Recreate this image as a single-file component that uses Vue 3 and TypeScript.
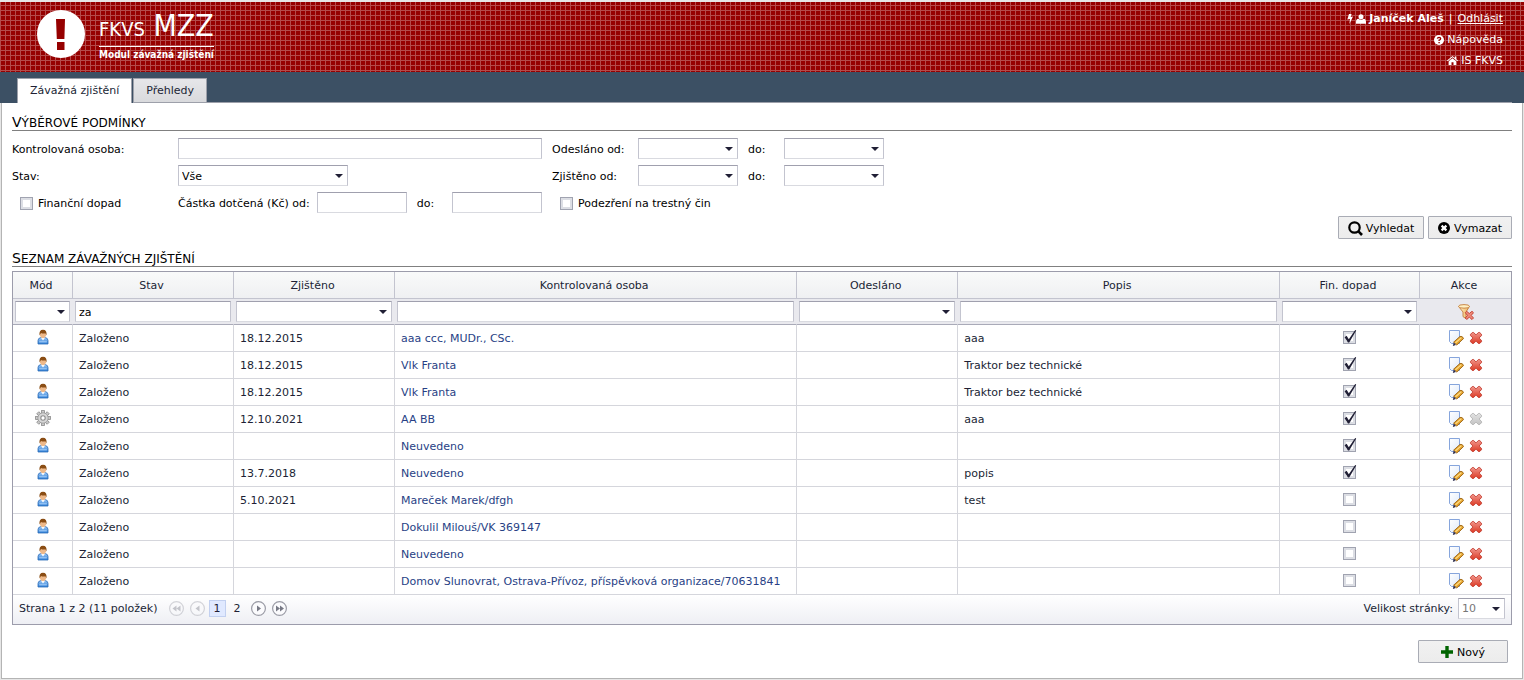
<script setup lang="ts">
import { ref } from 'vue'

interface Finding {
  mode: 'user' | 'gear'
  state: string
  found: string
  person: string
  sent: string
  description: string
  impact: boolean
}

const rows = ref<Finding[]>([
  { mode: 'user', state: 'Založeno', found: '18.12.2015', person: 'aaa ccc, MUDr., CSc.', sent: '', description: 'aaa', impact: true },
  { mode: 'user', state: 'Založeno', found: '18.12.2015', person: 'Vlk Franta', sent: '', description: 'Traktor bez technické', impact: true },
  { mode: 'user', state: 'Založeno', found: '18.12.2015', person: 'Vlk Franta', sent: '', description: 'Traktor bez technické', impact: true },
  { mode: 'gear', state: 'Založeno', found: '12.10.2021', person: 'AA BB', sent: '', description: 'aaa', impact: true },
  { mode: 'user', state: 'Založeno', found: '', person: 'Neuvedeno', sent: '', description: '', impact: true },
  { mode: 'user', state: 'Založeno', found: '13.7.2018', person: 'Neuvedeno', sent: '', description: 'popis', impact: true },
  { mode: 'user', state: 'Založeno', found: '5.10.2021', person: 'Mareček Marek/dfgh', sent: '', description: 'test', impact: false },
  { mode: 'user', state: 'Založeno', found: '', person: 'Dokulil Milouš/VK 369147', sent: '', description: '', impact: false },
  { mode: 'user', state: 'Založeno', found: '', person: 'Neuvedeno', sent: '', description: '', impact: false },
  { mode: 'user', state: 'Založeno', found: '', person: 'Domov Slunovrat, Ostrava-Přívoz, příspěvková organizace/70631841', sent: '', description: '', impact: false },
])

const dateRows = [
  { id: 'sent', label: 'Odesláno od:' },
  { id: 'found', label: 'Zjištěno od:' },
]

const stateFilter = ref('za')
const teeth = [0, 45, 90, 135, 180, 225, 270, 315]
</script>

<template>
  <div class="page">
    <svg class="defs" aria-hidden="true">
      <defs>
        <linearGradient id="gBlue" x1="0" y1="0" x2="0" y2="1">
          <stop offset="0" stop-color="#9cc8f6" />
          <stop offset="1" stop-color="#2f7fd6" />
        </linearGradient>
        <linearGradient id="gSheet" x1="0" y1="0" x2="1" y2="1">
          <stop offset="0" stop-color="#ffffff" />
          <stop offset="1" stop-color="#dfeafb" />
        </linearGradient>
        <linearGradient id="gRed" x1="0" y1="0" x2="0" y2="1">
          <stop offset="0" stop-color="#f0948a" />
          <stop offset="1" stop-color="#dc3b26" />
        </linearGradient>
        <linearGradient id="gGrey" x1="0" y1="0" x2="0" y2="1">
          <stop offset="0" stop-color="#e2e2e2" />
          <stop offset="1" stop-color="#c4c4c4" />
        </linearGradient>
        <linearGradient id="gFunnel" x1="0" y1="0" x2="1" y2="0">
          <stop offset="0" stop-color="#fff3cf" />
          <stop offset="1" stop-color="#eeb257" />
        </linearGradient>
        <symbol id="iCross" viewBox="0 0 16 16">
          <path d="M2.5 4.3 4.3 2.5H5.6L8 4.9 10.4 2.5H11.7L13.5 4.3V5.6L11.1 8 13.5 10.4V11.7L11.7 13.5H10.4L8 11.1 5.6 13.5H4.3L2.5 11.7V10.4L4.9 8 2.5 5.6Z" />
        </symbol>
        <symbol id="iUser" viewBox="0 0 16 16">
          <path d="M3 15V11.6Q3 9.3 5.5 8.6H10.5Q13 9.3 13 11.6V15Z" fill="url(#gBlue)" stroke="#2c6cb8" stroke-width=".8" />
          <path d="M5.8 8.5 8 11.4 10.2 8.5Z" fill="#fff" />
          <path d="M5 3.5H11V6.5Q10.6 9 8 9.2 5.4 9 5 6.5Z" fill="#eeb98a" />
          <path d="M4.5 6.6Q3.8 .8 8 .8 12.2 .8 11.5 6.6L10.4 4.2Q8 4.9 6 3.9Z" fill="#8a4d14" />
          <path d="M4.2 12.8H11.8" stroke="#a8d0fa" stroke-width="1" />
        </symbol>
        <symbol id="iEdit" viewBox="0 0 16 16">
          <path d="M1.5.5H11.5V13.5H3.5L1.5 11.5Z" fill="url(#gSheet)" stroke="#86a5dc" />
          <path d="M5.6 12.2 12 6.4Q14.6 5.9 15.6 8.5L8.8 15Z" fill="#e5a32f" stroke="#9a6212" stroke-width=".9" />
          <path d="M7.4 12.9 13.4 7.6" stroke="#ffe08a" stroke-width="1.2" />
          <path d="M5.8 12.6 7.9 14.9 4.8 15.9Z" fill="#2b2b4c" />
        </symbol>
      </defs>
    </svg>

    <header class="banner">
      <div class="brand">
        <svg class="logo" viewBox="0 0 48 48" aria-hidden="true">
          <circle cx="24" cy="24" r="24" fill="#fff" />
          <path d="M19 9H28L27.4 29H19.8ZM20 32H27.5V40H20Z" fill="#960000" />
        </svg>
        <div class="brand-text">
          <h1><small>FKVS</small> MZZ</h1>
          <p>Modul závažná zjištění</p>
        </div>
      </div>
      <nav class="user-links" aria-label="Uživatel">
        <div>
          <svg class="bolt" viewBox="0 0 6 10" aria-hidden="true"><path d="M2 0H4.6L3.6 3 6 2.6 2.4 10 3 5 .3 5.6Z" fill="#fff" /></svg>
          <svg class="person" viewBox="0 0 10 10" aria-hidden="true"><circle cx="5" cy="2.7" r="2.5" fill="#fff" /><path d="M0 9.7V8Q0 5 2.3 4.7 5 6.7 7.7 4.7 10 5 10 8V9.7Z" fill="#fff" /></svg>
          <b>Janíček Aleš</b><span>|</span><a href="#odhlasit" class="under">Odhlásit</a>
        </div>
        <a href="#napoveda">
          <svg class="person" viewBox="0 0 10 10" aria-hidden="true"><circle cx="5" cy="5" r="5" fill="#fff" /><path d="M3.3 3.7Q3.6 2.3 5 2.3 6.7 2.4 6.7 3.7 6.6 4.6 5.1 5.2V6" fill="none" stroke="#960000" stroke-width="1.3" /><path d="M4.4 7H5.8V8.3H4.4Z" fill="#960000" /></svg>
          Nápověda
        </a>
        <a href="#is-fkvs">
          <svg class="house" viewBox="0 0 11 9" aria-hidden="true"><path d="M5.5 0 7.8 1.9V.6H9.4V3.2L11 4.6 10.4 5.3 5.5 1.3.6 5.3 0 4.6ZM5.5 2.2 9.4 5.4V9H6.5V6.2H4.5V9H1.6V5.4Z" fill="#fff" /></svg>
          IS FKVS
        </a>
      </nav>
    </header>

    <nav class="tabs" aria-label="Moduly">
      <a href="#zjisteni" class="tab active">Závažná zjištění</a>
      <a href="#prehledy" class="tab">Přehledy</a>
      <span class="tab-line"></span>
    </nav>

    <main>
      <h2>Výběrové podmínky</h2>
      <form class="criteria" @submit.prevent>
        <label for="person" class="c1">Kontrolovaná osoba:</label>
        <input id="person" type="text" class="field wide" />
        <label for="state" class="c1 r2">Stav:</label>
        <span class="drop state r2"><select id="state"><option>Vše</option></select></span>

        <template v-for="(d, i) in dateRows" :key="d.id">
          <label :for="d.id + '-from'" class="c3" :class="{ r2: i === 1 }">{{ d.label }}</label>
          <span class="drop c4" :class="{ r2: i === 1 }"><input :id="d.id + '-from'" type="text" /></span>
          <label :for="d.id + '-to'" class="c5" :class="{ r2: i === 1 }">do:</label>
          <span class="drop c6" :class="{ r2: i === 1 }"><input :id="d.id + '-to'" type="text" /></span>
        </template>

        <label class="tick-label r3"><input type="checkbox" class="tick" />Finanční dopad</label>
        <div class="amount r3">
          <label for="amount-from">Částka dotčená (Kč) od:</label>
          <input id="amount-from" type="text" class="field" />
          <label for="amount-to" class="amount-to">do:</label>
          <input id="amount-to" type="text" class="field" />
        </div>
        <label class="tick-label r3 crime"><input type="checkbox" class="tick" />Podezření na trestný čin</label>
      </form>
      <div class="buttons">
        <button type="button" class="btn search">
          <svg width="15" height="15" viewBox="0 0 15 15" aria-hidden="true"><circle cx="6.5" cy="6.5" r="5.2" fill="none" stroke="#000" stroke-width="2.2" /><path d="M10.2 10.2 14 14" stroke="#000" stroke-width="2.6" /></svg>
          Vyhledat
        </button>
        <button type="button" class="btn clear">
          <svg width="12" height="12" viewBox="0 0 12 12" aria-hidden="true"><circle cx="6" cy="6" r="6" /><path d="M3.6 3.6 8.4 8.4M8.4 3.6 3.6 8.4" stroke="#fff" stroke-width="2.2" /></svg>
          Vymazat
        </button>
      </div>

      <h2 class="list-title">Seznam závažných zjištění</h2>
      <div class="grid">
        <table aria-label="Seznam závažných zjištění">
          <colgroup>
            <col class="w-mode" /><col class="w-mid" /><col class="w-mid" /><col class="w-person" /><col class="w-mid" /><col /><col class="w-impact" /><col class="w-actions" />
          </colgroup>
          <thead>
            <tr class="heads">
              <th>Mód</th><th>Stav</th><th>Zjištěno</th><th>Kontrolovaná osoba</th><th>Odesláno</th><th>Popis</th><th>Fin. dopad</th><th>Akce</th>
            </tr>
            <tr class="filters">
              <td><span class="drop"><select aria-label="Mód"><option></option></select></span></td>
              <td><input v-model="stateFilter" type="text" class="field" aria-label="Stav" /></td>
              <td><span class="drop"><input type="text" aria-label="Zjištěno" /></span></td>
              <td><input type="text" class="field" aria-label="Kontrolovaná osoba" /></td>
              <td><span class="drop"><input type="text" aria-label="Odesláno" /></span></td>
              <td><input type="text" class="field" aria-label="Popis" /></td>
              <td><span class="drop"><select aria-label="Fin. dopad"><option></option></select></span></td>
              <td>
                <div class="actions">
                  <button type="button" class="icon" aria-label="Zrušit filtr">
                    <svg width="16" height="16" viewBox="0 0 16 16" aria-hidden="true">
                      <path d="M.6 2.5 5 8V12.6L8 14.6V8L11.4 2.5Z" fill="url(#gFunnel)" stroke="#c47c3a" stroke-width=".9" />
                      <ellipse cx="6" cy="2.4" rx="5.5" ry="1.8" fill="#fff1c4" stroke="#c47c3a" stroke-width=".9" />
                      <path d="M7.3 8.7 8.7 7.3 11.3 9.5 14 7.3 15.5 8.7 13.2 11.4 15.5 14 14 15.5 11.3 13.2 8.7 15.5 7.3 14 9.5 11.4Z" fill="#ee8a7a" stroke="#c33b2c" stroke-width=".9" />
                    </svg>
                  </button>
                </div>
              </td>
            </tr>
          </thead>
          <tbody>
            <tr v-for="(row, i) in rows" :key="i">
              <td class="mode">
                <svg v-if="row.mode === 'user'" width="16" height="16" aria-hidden="true"><use href="#iUser" /></svg>
                <svg v-else width="16" height="16" viewBox="0 0 16 16" aria-hidden="true">
                  <rect v-for="a in teeth" :key="a" x="6.5" y=".6" width="3" height="4" fill="#c9c9c9" stroke="#8a8a8a" stroke-width=".8" :transform="`rotate(${a} 8 8)`" />
                  <circle cx="8" cy="8" r="5.2" fill="#d6d6d6" stroke="#979797" stroke-width=".8" />
                  <circle cx="8" cy="8" r="2.2" fill="#fff" stroke="#8f8f8f" stroke-width="1.1" />
                </svg>
              </td>
              <td>{{ row.state }}</td>
              <td>{{ row.found }}</td>
              <td><a href="#osoba">{{ row.person }}</a></td>
              <td>{{ row.sent }}</td>
              <td>{{ row.description }}</td>
              <td class="impact">
                <span class="tick-box">
                  <input v-model="row.impact" type="checkbox" class="tick" aria-label="Fin. dopad" />
                  <svg v-if="row.impact" class="mark" viewBox="0 0 15 15" aria-hidden="true"><path d="M1.6 8.2 3.6 6.8 5.8 10.2 12.2 1 13.2 1.6 6.2 13.6H5Z" fill="#201f35" /></svg>
                </span>
              </td>
              <td>
                <div class="actions">
                  <button type="button" class="icon" aria-label="Upravit"><svg width="16" height="16" aria-hidden="true"><use href="#iEdit" /></svg></button>
                  <button type="button" class="icon cross" :class="{ off: row.mode === 'gear' }" :disabled="row.mode === 'gear'" aria-label="Smazat"><svg width="16" height="16" aria-hidden="true"><use href="#iCross" /></svg></button>
                </div>
              </td>
            </tr>
          </tbody>
        </table>
        <div class="pager">
          <span class="summary">Strana 1 z 2 (11 položek)</span>
          <nav aria-label="Stránky">
            <button type="button" class="round" disabled aria-label="První"><svg viewBox="0 0 15 15"><circle cx="7.5" cy="7.5" r="6.9" /><path d="M7.5 4.5V10.5L3.5 7.5ZM11.5 4.5V10.5L7.5 7.5Z" /></svg></button>
            <button type="button" class="round" disabled aria-label="Předchozí"><svg viewBox="0 0 15 15"><circle cx="7.5" cy="7.5" r="6.9" /><path d="M9.5 4.5V10.5L5.5 7.5Z" /></svg></button>
            <span class="current">1</span>
            <a href="#strana-2">2</a>
            <button type="button" class="round" aria-label="Další"><svg viewBox="0 0 15 15"><circle cx="7.5" cy="7.5" r="6.9" /><path d="M6 4.5V10.5L10 7.5Z" /></svg></button>
            <button type="button" class="round" aria-label="Poslední"><svg viewBox="0 0 15 15"><circle cx="7.5" cy="7.5" r="6.9" /><path d="M4 4.5V10.5L8 7.5ZM8 4.5V10.5L12 7.5Z" /></svg></button>
          </nav>
          <label for="size">Velikost stránky:</label>
          <span class="drop size"><select id="size"><option>10</option></select></span>
        </div>
      </div>
      <div class="footer">
        <button type="button" class="btn new">
          <svg width="12" height="12" viewBox="0 0 12 12" aria-hidden="true"><path d="M4.3 0H7.7V4.3H12V7.7H7.7V12H4.3V7.7H0V4.3H4.3Z" fill="#006400" /></svg>
          Nový
        </button>
      </div>
    </main>
  </div>
</template>

<style>
body { background: #e6e6e6; }
</style>

<style scoped>
* { box-sizing: border-box; }
.page {
  padding: 2px 0 1px;
  font: 11px/15px "DejaVu Sans", Verdana, sans-serif;
  color: #000;
}
.defs { display: block; width: 0; height: 0; position: absolute; }
button, input, select { font: inherit; margin: 0; }
a { color: inherit; text-decoration: none; }

.banner {
  display: flex;
  justify-content: space-between;
  height: 70px;
  color: #fff;
  background:
    repeating-linear-gradient(90deg, #b44b4b 0 1px, transparent 1px 5px),
    repeating-linear-gradient(#960000 0 3px, #b44b4b 3px 4px, #960000 4px 5px);
}
.brand { display: flex; gap: 14px; padding: 8px 0 0 37px; }
.logo { width: 48px; height: 48px; }
.brand-text { font-family: "DejaVu Sans Condensed", Tahoma, "DejaVu Sans", sans-serif; }
h1 {
  margin: 0;
  padding-bottom: 1px;
  border-bottom: 1px solid #fff;
  font-size: 30px;
  line-height: 32px;
  font-weight: normal;
}
h1 small { font-size: 20px; }
.brand-text p {
  margin: 1px 0 0;
  font-size: 10px;
  font-weight: bold;
  line-height: 14px;
  text-align: center;
}
.user-links {
  display: flex;
  flex-direction: column;
  align-items: flex-end;
  padding: 6px 21px 0 0;
  line-height: 21px;
}
.user-links > * { display: flex; align-items: center; gap: 3px; }
.user-links span { margin: 0 2px; }
.under { text-decoration: underline; }
.bolt { width: 6px; height: 10px; }
.person { width: 10px; height: 10px; }
.house { width: 11px; height: 9px; }

.tabs {
  display: flex;
  align-items: flex-end;
  height: 31px;
  padding: 0 12px 0 17px;
  background: #3c5064;
}
.tab {
  padding: 4px 12px;
  border: 1px solid #9da0aa;
  margin-right: 1px;
  background: linear-gradient(#e6e6e9, #d9dadd);
  color: #201f35;
}
.tab.active { border-bottom: 0; background: #fff; padding-bottom: 5px; }
.tab-line { flex: 1; height: 1px; background: #9da0aa; margin-left: -1px; }

main {
  margin: 0 1px;
  padding: 11px 10px 15px;
  border: 1px solid #b4b4b4;
  border-top: 0;
  background: #fff;
}
h2 {
  margin: 0;
  height: 17px;
  border-bottom: 1px solid #808080;
  font-size: 12px;
  line-height: 17px;
  font-weight: normal;
  text-transform: uppercase;
}
h2::first-letter { font-size: 14px; }
.criteria {
  display: grid;
  grid-template-columns: 166px 374px 86px 110px 36px 100px;
  grid-template-rows: repeat(3, 21px);
  row-gap: 6px;
  padding-top: 7px;
  align-items: center;
}
.criteria label { padding-top: 2px; }
.criteria > * { grid-row: 1; }
.criteria > .r2 { grid-row: 2; }
.criteria > .r3 { grid-row: 3; }
.c1 { grid-column: 1; }
.c3 { grid-column: 3; }
.c4 { grid-column: 4; }
.c5 { grid-column: 5; }
.c6 { grid-column: 6; }
.c4, .c6 { width: 100px; }
.wide { width: 364px; grid-column: 2; }
.state { width: 170px; grid-column: 2; }
.crime { grid-column: 3 / 6; }
.field, .drop {
  display: block;
  height: 21px;
  border: 1px solid #c3c4cf;
  border-top-color: #a0a0ae;
  border-bottom-color: #d9dae0;
  background: #fff;
  padding: 1px 3px 0;
  color: #000;
  outline: none;
}
.field { border-radius: 0; min-width: 0; }
td > .field, td > .drop { width: 100%; }
.drop { position: relative; padding: 0; }
.drop::after {
  content: "";
  position: absolute;
  right: 4px;
  top: 8px;
  border: 4px solid transparent;
  border-top: 4px solid #201f35;
  border-bottom: 0;
  pointer-events: none;
}
.drop select, .drop input {
  display: block;
  width: 100%;
  height: 19px;
  padding: 1px 16px 0 3px;
  border: 0;
  background: transparent;
  appearance: none;
  color: inherit;
  outline: none;
}
.amount {
  display: flex;
  justify-content: flex-end;
  align-items: center;
  width: 364px;
  grid-column: 2;
  white-space: nowrap;
}
.amount .field { width: 90px; margin-left: 7px; flex: none; }
.amount .amount-to { width: 39px; padding-left: 10px; }
.criteria .tick-label { display: flex; align-items: center; gap: 5px; padding: 2px 0 0 8px; white-space: nowrap; }
.tick {
  display: block;
  width: 13px;
  height: 13px;
  flex: none;
  appearance: none;
  border: 1px solid #a0a3b0;
  background: #fff;
  box-shadow: inset 0 0 0 2px #dcdee4;
}
.buttons { display: flex; justify-content: flex-end; gap: 4px; padding-top: 3px; }
.btn {
  display: flex;
  align-items: center;
  justify-content: center;
  gap: 4px;
  height: 23px;
  padding: 1px 0 0;
  border: 1px solid #a9acb5;
  border-radius: 1px;
  background: linear-gradient(#f1f1f1, #ececec);
  color: #000;
}
.search { width: 86px; gap: 3px; }
.clear { width: 84px; }
.new { width: 90px; }
.list-title { margin-top: 11px; }

.grid { margin-top: 4px; border: 1px solid #9c9cab; color: #201f35; }
table { width: 100%; table-layout: fixed; border-collapse: separate; border-spacing: 0; }
.w-mode { width: 60px; }
.w-mid { width: 10.75%; }
.w-person { width: 26.85%; }
.w-impact { width: 140px; }
.w-actions { width: 91px; }
th, td { border: 0 solid #d5d6dc; border-width: 0 1px 1px 0; padding: 0 6px; }
th:last-child, td:last-child { border-right: 0; }
th {
  height: 27px;
  padding-right: 9px;
  font-weight: normal;
  background: linear-gradient(#f9fafa, #eff0f2);
  border-color: #c3c4cf;
}
.filters td { height: 26px; padding: 2px; background: #e9e9ee; border-color: #a9aab8; border-right-color: #e9e9ee; }
tbody td { height: 27px; white-space: nowrap; overflow: hidden; }
tbody a { color: #283f85; }
.mode svg { display: block; margin: 0 auto; }
td.mode { padding-bottom: 3px; }
td.impact { padding-bottom: 1px; }
.tick-box { display: block; position: relative; width: 13px; margin: 0 auto; }
.mark { position: absolute; left: 0; top: -2px; width: 15px; height: 15px; pointer-events: none; }
.actions { display: flex; justify-content: center; gap: 4px; }
.icon { display: block; width: 16px; height: 16px; padding: 0; border: 0; background: none; }
.icon svg { display: block; }
.cross { fill: url(#gRed); stroke: #c23a2c; stroke-width: .9px; }
.cross.off { fill: url(#gGrey); stroke: #b0b0b0; }

.pager {
  display: flex;
  align-items: center;
  height: 29px;
  padding: 0 6px 3px;
  background: linear-gradient(#fff, #eeeff4);
}
.pager nav { display: flex; align-items: center; gap: 6px; flex: 1; padding-left: 11px; }
.pager nav .current, .pager nav a { width: 17px; line-height: 15px; text-align: center; border: 1px solid transparent; }
.pager nav .current { background: #e0e9ff; border-color: #c2d0f0; margin: 0 -3px 0 -2px; }
.pager nav a { margin-right: -1px; }
.round { width: 15px; height: 15px; padding: 0; border: 0; background: none; }
.round svg { display: block; fill: #777985; }
.round circle { fill: #fbfbfd; stroke: #9b9ca6; stroke-width: 1.2px; }
.round:disabled { opacity: .4; }
.size { width: 47px; margin-left: 5px; color: #777; }
.footer { display: flex; justify-content: flex-end; padding: 15px 4px 0 0; }
</style>
